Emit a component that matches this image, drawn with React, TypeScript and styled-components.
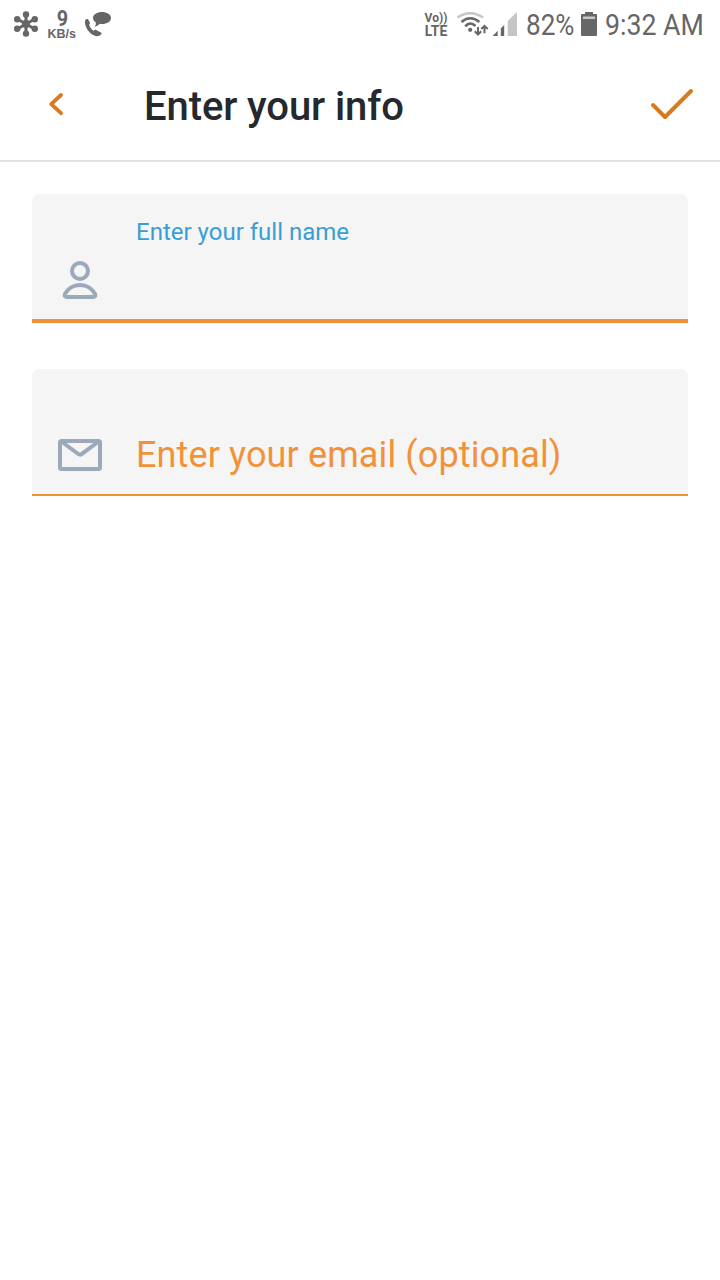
import React from 'react';
import styled, { createGlobalStyle } from 'styled-components';

const GlobalStyle = createGlobalStyle`
  *, *::before, *::after { box-sizing: border-box; }
  body { margin: 0; background: #fff; font-family: Roboto, "Liberation Sans", sans-serif; }
  svg { display: block; flex: none; }
  button { appearance: none; border: 0; padding: 0; background: none; font: inherit; }
`;

const Screen = styled.main`
  width: 720px;
  min-height: 1280px;
  background: #fff;
`;

const StatusBar = styled.div`
  height: 48px;
  display: flex;
  justify-content: space-between;
  padding: 0 17px 0 12px;
  color: #666;
`;

const StatusGroup = styled.div`
  display: flex;
  align-items: center;
  height: 48px;
`;

const StackedLabel = styled.div<{ $width: number; $before?: number; $after: number }>`
  width: ${p => p.$width}px;
  margin: 0 ${p => p.$after}px 0 ${p => p.$before ?? 0}px;
  display: flex;
  flex-direction: column;
  align-items: center;
  padding-top: 2px;
`;

const StackedLine = styled.span<{ $size: number; $line: number; $scale?: number; $wide?: boolean }>`
  font-family: ${p => (p.$wide ? '"Liberation Sans", Arial' : 'Roboto')}, sans-serif;
  font-size: ${p => p.$size}px;
  line-height: ${p => p.$line}px;
  font-weight: 700;
  white-space: nowrap;
  transform: scaleX(${p => p.$scale ?? 1});
`;

const StatusText = styled.span<{ $width: number; $scale: number; $before?: number }>`
  width: ${p => p.$width}px;
  margin-left: ${p => p.$before ?? 0}px;
  font-size: 30px;
  line-height: 36px;
  padding-top: 1px;
  white-space: nowrap;
  transform: scaleX(${p => p.$scale});
  transform-origin: left center;
`;

const Header = styled.header`
  height: 114px;
  border-bottom: 2px solid #e1e2e6;
  display: flex;
  align-items: center;
  padding: 0 24px 0 40px;
`;

const IconButton = styled.button<{ $width: number }>`
  width: ${p => p.$width}px;
  height: 48px;
  display: flex;
  align-items: center;
  margin-bottom: 1px;
`;

const Title = styled.h1`
  flex: 1;
  margin: 0 0 0 72px;
  padding-top: 6px;
  font-size: 40px;
  line-height: 48px;
  font-weight: 500;
  letter-spacing: -0.1px;
  color: #25282d;
  white-space: nowrap;
`;

const Form = styled.form`
  display: flex;
  flex-direction: column;
  gap: 46px;
  padding: 32px 32px 0;
`;

const Field = styled.label<{ $active?: boolean }>`
  height: ${p => (p.$active ? 129 : 127)}px;
  display: flex;
  border-bottom: ${p => (p.$active ? 4 : 2)}px solid #ef9136;
  background: #f5f5f5;
  clip-path: inset(0 round 8px 8px 0 0);
`;

const FieldIcon = styled.span`
  width: 104px;
  padding: 62px 0 0 24px;
`;

const FieldLabel = styled.span<{ $active?: boolean }>`
  padding-top: ${p => (p.$active ? 24 : 64)}px;
  font-size: ${p => (p.$active ? 24 : 36)}px;
  line-height: ${p => (p.$active ? 28 : 44)}px;
  letter-spacing: ${p => (p.$active ? 0 : 0.12)}px;
  color: ${p => (p.$active ? '#379fd6' : '#f29238')};
  white-space: nowrap;
`;

const HubIcon = () => (
  <svg width="28" height="28" viewBox="0 0 28 28" fill="#666" stroke="#666">
    <path d="M14 4v20M5.3 9l17.4 10M22.7 9L5.3 19" strokeWidth="3.1" />
    <g stroke="none">
      <circle cx="14" cy="14" r="4" />
      <circle cx="14" cy="4.4" r="3.2" />
      <circle cx="14" cy="23.6" r="3.2" />
      <circle cx="5.2" cy="9.2" r="3.2" />
      <circle cx="22.8" cy="9.2" r="3.2" />
      <circle cx="5.2" cy="18.8" r="3.2" />
      <circle cx="22.8" cy="18.8" r="3.2" />
    </g>
  </svg>
);

const CallMessageIcon = () => (
  <svg width="28" height="28" viewBox="0 0 28 28" fill="#666">
    <path d="M1.2 10.5C1.5 9.2 3 8.6 4.1 9.3l1.7 3.2c.4.8.1 1.6-.7 2.3.8 2.6 2.3 4.7 4.5 6 1-.9 1.8-1.2 2.6-.8l4.7 2.4c1 .5.7 1.5-.1 2.3-2.2 2-5.3 1.9-8.3 0C4.2 22.1 0 15.5 1.2 10.5Z" />
    <path d="M18 2c5 0 9 2.500 9 6s-4 6-9 6c-.7 0-1.500-.1-2.200-.2-1.400 1.600-3.200 2.700-5.300 2.900 1.200-1.200 1.600-2.700 1.300-4.200C10.100 11.400 9 9.800 9 8c0-3.500 4-6 9-6Z" />
  </svg>
);

const WifiIcon = () => (
  <svg width="35" height="32" viewBox="0 0 35 32" fill="none">
    <path d="M.5 9.500Q13.300 .9 26 9.500" stroke="#c5c5c5" strokeWidth="2.500" />
    <path d="M4.500 14Q13.300 6.400 22.300 14M8.200 18.300Q13.200 12.700 18.500 18" stroke="#666" strokeWidth="2.500" />
    <circle cx="13.200" cy="21.800" r="2.100" fill="#666" />
    <path d="M21 19v7.500M17.800 23.300l3.200 3.200 3.200-3.200M27.500 25.200v-7.500M24.300 21l3.200-3.200 3.200 3.200" stroke="#666" strokeWidth="2" />
  </svg>
);

const SignalIcon = () => (
  <svg width="26" height="26" viewBox="0 0 26 26">
    <path d="M.7 25l5-5.200V25z" fill="#666" />
    <path d="M8.800 17.500L12.200 14v11H8.800z" fill="#666" />
    <path d="M15.700 10L25 1v24h-9.300z" fill="#c5c5c5" />
  </svg>
);

const BatteryIcon = () => (
  <svg width="16" height="24" viewBox="0 0 16 24">
    <path d="M4 0h8v2h3q1 0 1 1v20q0 1-1 1H1q-1 0-1-1V3q0-1 1-1h3z" fill="#666" />
    <path d="M2 4.500h12V7H2z" fill="#c8c8c8" />
  </svg>
);

const BackIcon = () => (
  <svg width="32" height="32" viewBox="0 0 32 32" fill="none" stroke="#d97a20" strokeWidth="3.800" strokeLinecap="round" strokeLinejoin="round">
    <path d="M21 7L11.200 16.200 21 25.200" />
  </svg>
);

const CheckIcon = () => (
  <svg width="48" height="48" viewBox="0 0 48 48" fill="none" stroke="#d97a20" strokeWidth="4" strokeLinecap="round" strokeLinejoin="round">
    <path d="M5 25l12 12 26-26" />
  </svg>
);

const PersonIcon = () => (
  <svg width="48" height="48" viewBox="0 0 48 48" fill="none" stroke="#9ba9bb" strokeWidth="4" strokeLinejoin="round">
    <circle cx="24" cy="15" r="8" />
    <path d="M24 29c-7 0-12.500 4-15 8.800-.8 1.700-.2 3.200 1.500 3.200h27c1.700 0 2.300-1.500 1.500-3.200C36.500 33 31 29 24 29Z" />
  </svg>
);

const MailIcon = () => (
  <svg width="48" height="48" viewBox="0 0 48 48" fill="none" stroke="#9ba9bb" strokeWidth="4" strokeLinejoin="round">
    <rect x="4" y="10" width="40" height="28" rx="1.500" />
    <path d="M6 11l16.300 12q1.700 1.200 3.400 0L42 11" />
  </svg>
);

export default function App() {
  return (
    <Screen>
      <GlobalStyle />
      <StatusBar>
        <StatusGroup>
          <HubIcon />
          <StackedLabel $width={28} $before={8} $after={8}>
            <StackedLine $size={22} $line={18} $scale={0.9}>9</StackedLine>
            <StackedLine $size={12} $line={12} $scale={1.04} $wide>KB/s</StackedLine>
          </StackedLabel>
          <CallMessageIcon />
        </StatusGroup>
        <StatusGroup>
          <StackedLabel $width={24} $after={9}>
            <StackedLine $size={12} $line={13}>Vo))</StackedLine>
            <StackedLine $size={14} $line={13}>LTE</StackedLine>
          </StackedLabel>
          <WifiIcon />
          <SignalIcon />
          <StatusText $width={55} $scale={0.87} $before={8}>82%</StatusText>
          <BatteryIcon />
          <StatusText $width={98} $scale={0.89} $before={8}>9:32 AM</StatusText>
        </StatusGroup>
      </StatusBar>
      <Header>
        <IconButton $width={32} aria-label="Back"><BackIcon /></IconButton>
        <Title>Enter your info</Title>
        <IconButton $width={48} aria-label="Done"><CheckIcon /></IconButton>
      </Header>
      <Form>
        <Field $active>
          <FieldIcon><PersonIcon /></FieldIcon>
          <FieldLabel $active>Enter your full name</FieldLabel>
        </Field>
        <Field>
          <FieldIcon><MailIcon /></FieldIcon>
          <FieldLabel>Enter your email (optional)</FieldLabel>
        </Field>
      </Form>
    </Screen>
  );
}
